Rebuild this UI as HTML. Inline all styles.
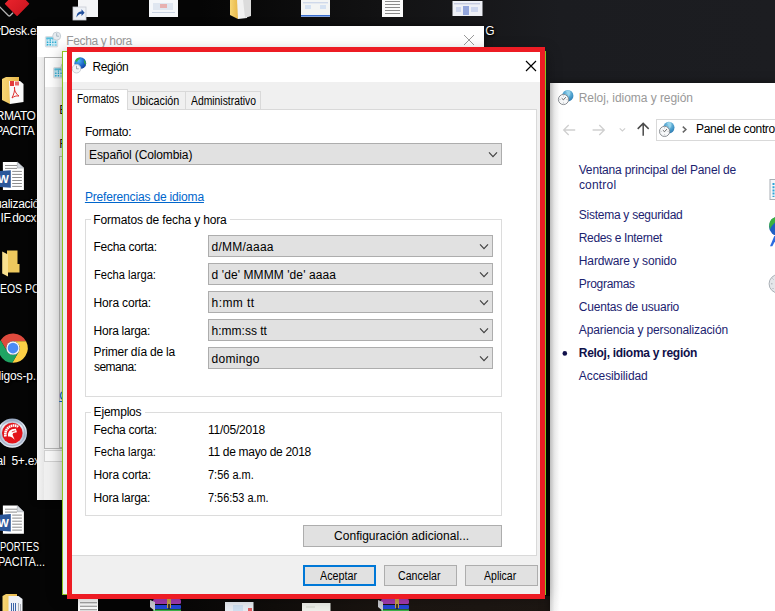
<!DOCTYPE html>
<html lang="es"><head><meta charset="utf-8"><title>Región</title>
<style>
html,body{margin:0;padding:0}
body{width:775px;height:611px;overflow:hidden;position:relative;background:#070707;font-family:"Liberation Sans",sans-serif;font-size:12px}
.a{position:absolute}
.t{position:absolute;white-space:pre;line-height:calc(1.117em + 4px);transform-origin:0 50%}
#bg{left:0;top:0;width:775px;height:611px;background:
 linear-gradient(90deg,rgba(0,0,0,0) 150px,#1b1511 400px,#1d1713 560px) 0 596px/775px 15px no-repeat,
 linear-gradient(90deg,#050505 200px,#121213 380px,#1b1c20 560px,#1c1d21 775px) 0 0/775px 90px no-repeat,
 #050505}
.combo{position:absolute;background:#e1e1e1;border:1px solid #adadad;box-sizing:border-box;height:22px}
.combo svg{position:absolute;right:3px;top:7px}
.btn{position:absolute;background:#e1e1e1;border:1px solid #adadad;box-sizing:border-box;height:21px}
.grp{position:absolute;border:1px solid #dcdcdc;box-sizing:border-box}
</style></head><body>
<div id="bg" class="a"></div>

<!-- ================= desktop icons ================= -->
<div id="desk" class="a" style="left:0;top:0;width:775px;height:611px">
<svg class="a" style="left:0;top:0" width="775" height="611" viewBox="0 0 775 611">
 <defs>
  <linearGradient id="gRed" x1="0" y1="0" x2="1" y2="1"><stop offset="0" stop-color="#f0262f"/><stop offset="1" stop-color="#c8141e"/></linearGradient>
  <linearGradient id="gFold" x1="0" y1="0" x2="1" y2="0"><stop offset="0" stop-color="#f7d675"/><stop offset="1" stop-color="#e8b84a"/></linearGradient>
  <linearGradient id="gSilver" x1="0" y1="0" x2="0" y2="1"><stop offset="0" stop-color="#8fa0bb"/><stop offset=".25" stop-color="#eef2f8"/><stop offset=".6" stop-color="#b4bfd2"/><stop offset="1" stop-color="#e6ebf3"/></linearGradient>
  <g id="word">
    <path d="M2.900 0 H17.300 L23.900 6.200 V28.100 H2.900 Z" fill="#fff"/>
    <path d="M17.300 0 L23.900 6.200 H17.300 Z" fill="#d5d8de" stroke="#8f949c" stroke-width=".5"/>
    <path d="M5 3.600h12M5 6.500h12M12.200 9.500h9.700M12.200 12.500h9.700M12.200 15.600h9.700M12.200 18.600h9.700M12.200 21.600h9.700M12.200 24.500h9.700" stroke="#8d8d8d" stroke-width="1"/>
    <path d="M-4 9.300 L10.800 8.300 V25.800 L-4 24.800Z" fill="#2b579a"/>
    <text x="3.300" y="21" font-family="Liberation Sans, sans-serif" font-size="11.500" font-weight="bold" fill="#fff" text-anchor="middle">W</text>
  </g>
  <g id="rar">
    <rect x="3" y="0" width="28" height="5" rx="1.5" fill="#a43bb0"/>
    <rect x="3" y="6" width="28" height="4" rx="1" fill="#2347d6"/>
    <rect x="3" y="10.5" width="28" height="2" fill="#3bb04a"/>
    <path d="M0 1 L5 3 V12 L0 8Z" fill="#c9c9cf"/>
    <rect x="17" y="0" width="4" height="9" fill="#c9a24a"/>
    <rect x="18.2" y="5" width="1.6" height="5" fill="#222"/>
  </g>
 </defs>
 <!-- AnyDesk -->
 <path d="M-1 6.200 L8.300 15.500 Q9.300 16.500 10.300 15.500 L13 12.800" stroke="#b4b4b4" stroke-width="1.300" fill="none"/>
 <path d="M17.100 -7.600 L28.400 3.700 L17.100 15.200 L5.700 3.700 Z" fill="url(#gRed)" stroke="url(#gRed)" stroke-width="1.600" stroke-linejoin="round"/>
 <!-- shortcut -->
 <rect x="78" y="-2" width="20" height="19" fill="#f4f5f7"/>
 <rect x="73" y="7" width="13" height="13" fill="#eef1f6" stroke="#c8ccd4" stroke-width=".8"/>
 <path d="M76.5 17.5 C76.5 13 79 11.5 81.5 11.5 V9.3 L84.6 12.7 L81.5 16 V13.8 C79.5 13.8 78 15 76.5 17.5Z" fill="#1f4e9c"/>
 <!-- thumbnails top -->
 <rect x="149" y="-1" width="29" height="18" fill="#f5f7fa"/><rect x="153" y="3" width="20" height="7" fill="#dfe6f0"/><rect x="160" y="4" width="7" height="4" fill="#e7b0b0"/><rect x="152" y="12" width="23" height="1" fill="#c9d3e3"/>
 <rect x="301" y="-1" width="29" height="18" fill="#f3f5f4"/><rect x="303" y="2" width="25" height="1.4" fill="#cfd9ea"/><rect x="305" y="5" width="6" height="4" fill="#d5e2f2"/><rect x="320" y="5" width="6" height="4" fill="#d5e2f2"/><rect x="301" y="15" width="29" height="1.6" fill="#3a6fd0"/>
 <rect x="452.500" y="1" width="30" height="15" fill="#eef0f6"/><rect x="463" y="6" width="6" height="9" fill="#93a6dc"/><rect x="456" y="7" width="5" height="5" fill="#cdd6ee"/><rect x="471" y="7" width="7" height="5" fill="#cdd6ee"/><rect x="454" y="3" width="26" height="1.4" fill="#c5cbe0"/>
 <!-- folder top -->
 <path d="M230 -1 H238 V19 L230 15Z" fill="url(#gFold)"/>
 <path d="M237 -1 H247 V18 L238 19Z" fill="#f2f2f2"/><path d="M243 -1 H251 V16 L245 18Z" fill="#dcdcdc"/>
 <!-- doc top -->
 <rect x="382" y="-1" width="21" height="18" fill="#fbfbfb"/>
 <path d="M385 1.500h15M385 4.500h15M385 7.500h15M385 10.500h15M385 13.500h15" stroke="#8b8b8b" stroke-width="1"/>
 <!-- PDF folder -->
 <path d="M2 79 L6 77 H19 V82 H10 V104 L2 100Z" fill="url(#gFold)"/>
 <path d="M9 81 H20 L23.500 84 V102 L10 104Z" fill="#fafafa"/>
 <path d="M10 81 h4 v5 h-4z" fill="#e23b3b"/><path d="M15 81.500 h4 v4 h-4z" fill="#e86a6a"/>
 <path d="M12 98 C14 94 15 90 14.500 87 C14 90 16 94 19 96 C16 95.500 14 96.500 12 98Z" stroke="#e03030" stroke-width="1" fill="none"/>
 <!-- word docs -->
 <use href="#word" x="0" y="161.900"/>
 <use href="#word" x="0" y="505.600"/>
 <!-- folder mid -->
 <path d="M7 250.500 H17.500 V264 H19.500 V272.500 H7 Z" fill="#efc95e"/>
 <path d="M2.200 251.500 L8 254.500 V276.500 L2.200 273.500 Z" fill="#f9e08e"/>
 <!-- chrome -->
 <g transform="translate(13,348.100) scale(.98)">
  <path d="M-12.635 -8.085 A15 15 0 0 1 13.320 -6.900 L0 -6.900 A6.900 6.900 0 0 0 -5.975 3.450 Z" fill="#de4a3d"/>
  <path d="M13.320 -6.900 A15 15 0 0 1 -0.685 14.985 L5.975 3.450 A6.900 6.900 0 0 0 0 -6.900 Z" fill="#fdd045"/>
  <path d="M-0.685 14.985 A15 15 0 0 1 -12.635 -8.085 L-5.975 3.450 A6.900 6.900 0 0 0 5.975 3.450 Z" fill="#1fa463"/>
  <circle r="6.900" fill="#f4f6f8"/><circle r="5.400" fill="#4a8bf5"/>
 </g>
 <!-- spartan -->
 <g transform="translate(12.300,433.100)">
  <circle r="14.700" fill="url(#gSilver)"/>
  <circle r="12.600" fill="none" stroke="#93a3bd" stroke-width="1.200" opacity=".7"/>
  <circle r="10.300" fill="#e3141b"/>
  <path d="M-6.800 3.500 C-8 -3 -3.500 -7.500 1.500 -7.600 C3.500 -7.600 5 -7 5.800 -6.200" stroke="#fff" stroke-width="2.600" fill="none" stroke-dasharray="1.600 .500"/>
  <path d="M-4.200 3.300 C-5 -1.500 -1.500 -4.600 3.600 -4.300 L4.600 -.800 L1 -.200 L.200 1.600 L2.400 6.600 L.200 4.600 C-.800 3.600 -2.500 3.300 -4.200 3.300Z" fill="#fff"/>
  <path d="M-.500 -1.200 L3 -2.400" stroke="#e3141b" stroke-width=".800"/>
 </g>
 <!-- bottom folder -->
 <path d="M2.500 596 L6 594 H17 V611 H2.500Z" fill="url(#gFold)"/>
 <path d="M8.500 596 H18.500 L22.500 599 V611 H8.500Z" fill="#eef1f6"/>
 <path d="M11.500 603v8M13.500 603v8M15.500 603v8" stroke="#3a64a8" stroke-width="1"/><path d="M18.500 603v8M20.500 604v7" stroke="#9aa0a8" stroke-width=".8"/>
 <!-- bottom row -->
 <rect x="78" y="599" width="20" height="13" fill="#fbfbfb"/>
 <path d="M80 602.700h17M80 606.300h17M80 609.800h17" stroke="#8b8b8b" stroke-width="1.100"/>
 <use href="#rar" x="150" y="599"/>
 <use href="#rar" x="378" y="599"/>
 <rect x="225" y="602" width="28.500" height="10" fill="#e8edf3"/><rect x="233" y="605" width="10" height="6" fill="#cfe0f0"/><rect x="248" y="608" width="4" height="3" fill="#e06060"/>
 <rect x="302" y="603" width="28.500" height="9" fill="#eef0ea"/><rect x="306" y="606" width="9" height="2" fill="#dfe3da"/>
</svg>

<span class="t" style="left:-5.3px;top:23.1px;font-size:12px;color:#fff;letter-spacing:-0.250px;text-shadow:1px 1px 2px #000,0 0 2px #000;">yDesk.exe</span>
<span class="t" style="left:-4.2px;top:108.1px;font-size:12px;color:#fff;letter-spacing:-0.559px;text-shadow:1px 1px 2px #000,0 0 2px #000;">RMATO</span>
<span class="t" style="left:-4.7px;top:123.1px;font-size:12px;color:#fff;letter-spacing:-0.412px;text-shadow:1px 1px 2px #000,0 0 2px #000;">PACITA</span>
<span class="t" style="left:-5.0px;top:195.6px;font-size:12px;color:#fff;letter-spacing:-0.300px;text-shadow:1px 1px 2px #000,0 0 2px #000;">ualización</span>
<span class="t" style="left:0.4px;top:210.1px;font-size:12px;color:#fff;letter-spacing:-0.300px;text-shadow:1px 1px 2px #000,0 0 2px #000;">IF.docx</span>
<span class="t" style="left:-0.1px;top:281.1px;font-size:12px;color:#fff;transform:scaleX(0.872);text-shadow:1px 1px 2px #000,0 0 2px #000;">EOS POS</span>
<span class="t" style="left:-5.5px;top:368.1px;font-size:12px;color:#fff;letter-spacing:-0.150px;text-shadow:1px 1px 2px #000,0 0 2px #000;">digos-p...</span>
<span class="t" style="left:-3.5px;top:452.6px;font-size:12px;color:#fff;letter-spacing:-0.250px;word-spacing:3px;text-shadow:1px 1px 2px #000,0 0 2px #000;">al 5+.exe</span>
<span class="t" style="left:-0.3px;top:539.1px;font-size:12px;color:#fff;transform:scaleX(0.794);text-shadow:1px 1px 2px #000,0 0 2px #000;">PORTES</span>
<span class="t" style="left:-2.2px;top:554.1px;font-size:12px;color:#fff;transform:scaleX(0.912);text-shadow:1px 1px 2px #000,0 0 2px #000;">PACITA...</span>
<span class="t" style="left:485.3px;top:23.1px;font-size:12px;color:#fff;text-shadow:1px 1px 2px #000,0 0 2px #000;">G</span>
</div>

<!-- ================= Control panel window ================= -->
<div id="cp" class="a" style="left:550px;top:83px;width:225px;height:528px;background:#fff;box-shadow:0 0 8px rgba(0,0,0,.5)">
 <div class="a" style="left:0;top:0;width:10px;height:528px;background:linear-gradient(90deg,#d4d4d4,#f2f2f2 45%,#fff)"></div>
 <div class="a" style="left:106px;top:36px;width:130px;height:22px;border:1px solid #d9d9d9;box-sizing:border-box"></div>
 <svg class="a" style="left:0;top:0" width="225" height="528" viewBox="550 83 225 528">
 <defs>
  <radialGradient id="gGl2" cx=".5" cy=".3" r=".8"><stop offset="0" stop-color="#8fd0ea"/><stop offset=".6" stop-color="#3f94c6"/><stop offset="1" stop-color="#2a6ea6"/></radialGradient>
  <g id="clk">
   <ellipse cx="4.300" cy="-3.800" rx="5.600" ry="5.800" fill="url(#gGl2)"/>
   <path d="M2 -8.500 C4 -7 5 -5 4.500 -2.500 C6.500 -4 7.500 -6.500 6.500 -9 C5 -9.600 3.500 -9.400 2 -8.500Z" fill="#9fd8ee" opacity=".8"/>
   <circle cx="0" cy="0" r="5.100" fill="#f7f8f9" stroke="#8b8f94" stroke-width="1"/>
   <path d="M0 -4v1M0 4v-1M-4 0h1M4 0h-1" stroke="#9aa0a6" stroke-width=".7"/>
   <path d="M-1.800 -1.200 L0 .300 L2.300 -2.300" stroke="#444" stroke-width=".8" fill="none"/>
  </g>
 </defs>
 <use href="#clk" x="563.500" y="99.500"/>
 <use href="#clk" x="664.600" y="131.400"/>
 <!-- nav arrows -->
 <path d="M575.200 130 H563.700 M568.700 125 L563.700 130 L568.700 135" stroke="#cfcfcf" stroke-width="1.300" fill="none"/>
 <path d="M592.600 130 H604.300 M599.300 125 L604.300 130 L599.300 135" stroke="#cfcfcf" stroke-width="1.300" fill="none"/>
 <path d="M619.700 128.300 L622.400 131 L625.100 128.300" stroke="#cfcfcf" stroke-width="1.100" fill="none"/>
 <path d="M643.200 135.700 V123.400 M637.700 128.900 L643.200 123.400 L648.700 128.900" stroke="#4a4a4a" stroke-width="1.500" fill="none"/>
 <path d="M682.800 126.600 L685.900 129.500 L682.800 132.400" stroke="#666" stroke-width="1.500" fill="none"/>
 <!-- bullet -->
 <circle cx="564.800" cy="353.400" r="2.300" fill="#10104a"/>
 <!-- right icons -->
 <rect x="770" y="179.500" width="8" height="20" fill="#f4f6f8" stroke="#a9afb6" stroke-width="1"/>
 <path d="M773.500 183v14" stroke="#2fa4d8" stroke-width="2" stroke-dasharray="2 1.200"/>
 <circle cx="778.800" cy="226.300" r="9.800" fill="#1f5fc4"/>
 <path d="M769.300 224 C769.800 220.500 772 217.800 775.500 217 V222 C773 224.500 771 226.500 770 229.500 C769.400 228 769.200 226 769.300 224Z" fill="#3bb23e"/>
 <path d="M770 246.300 L774.300 236 H776 V239.500 L772.300 246.300Z" fill="#2b6be0"/>
 <circle cx="778.400" cy="283.800" r="9.300" fill="#e4e7ea" stroke="#aab0b6" stroke-width="1"/>
 <path d="M771 283.800h1.500M772.500 278.500l1 1M772.500 289l1 -1" stroke="#9aa0a6" stroke-width=".8"/>
</svg>

</div>
<div class="a" style="left:0;top:0">
<span class="t" style="left:578.7px;top:90.1px;font-size:12px;color:#999;letter-spacing:-0.052px;">Reloj, idioma y región</span>
<span class="t" style="left:696.1px;top:121.1px;font-size:12px;color:#000;letter-spacing:-0.356px;">Panel de control</span>
<span class="t" style="left:578.7px;top:162.1px;font-size:12px;color:#1c2370;letter-spacing:-0.156px;">Ventana principal del Panel de</span>
<span class="t" style="left:578.9px;top:177.1px;font-size:12px;color:#1c2370;letter-spacing:0.195px;">control</span>
<span class="t" style="left:578.8px;top:207.1px;font-size:12px;color:#1c2370;letter-spacing:-0.263px;">Sistema y seguridad</span>
<span class="t" style="left:578.8px;top:230.1px;font-size:12px;color:#1c2370;letter-spacing:-0.349px;">Redes e Internet</span>
<span class="t" style="left:578.8px;top:253.1px;font-size:12px;color:#1c2370;letter-spacing:-0.129px;">Hardware y sonido</span>
<span class="t" style="left:578.8px;top:276.1px;font-size:12px;color:#1c2370;letter-spacing:-0.298px;">Programas</span>
<span class="t" style="left:578.8px;top:299.1px;font-size:12px;color:#1c2370;letter-spacing:-0.210px;">Cuentas de usuario</span>
<span class="t" style="left:578.8px;top:322.1px;font-size:12px;color:#1c2370;letter-spacing:-0.128px;">Apariencia y personalización</span>
<span class="t" style="left:578.8px;top:345.1px;font-size:12px;color:#10104a;letter-spacing:-0.295px;font-weight:bold;">Reloj, idioma y región</span>
<span class="t" style="left:578.8px;top:368.1px;font-size:12px;color:#1c2370;letter-spacing:-0.087px;">Accesibilidad</span>
</div>

<!-- ================= Fecha y hora window ================= -->
<div id="fh" class="a" style="left:37px;top:26px;width:447px;height:474px;background:#f0f0f0;box-shadow:0 0 6px rgba(0,0,0,.6)">
 <div class="a" style="left:0;top:0;width:447px;height:31px;background:#fff"></div>
 <div class="a" style="left:0;top:31px;width:7px;height:443px;background:linear-gradient(90deg,#f6f6f6,#e6e6e6)"></div>
 <!-- inner window -->
 <div class="a" style="left:7px;top:31px;width:430px;height:392px;background:#f0f0f0;border:1px solid #b4b4b4;box-sizing:border-box">
   <div class="a" style="left:0;top:0;width:428px;height:29px;background:#fff"></div>
   <div class="a" style="left:14px;top:98px;width:100px;height:290px;border:1px solid #b9b9b9;background:#f4f4f4"></div>
 </div>
 <div class="a" style="left:7px;top:424px;width:60px;height:12px;background:#f8f8f8;border:1px solid #d0d0d0;box-sizing:border-box"></div>
 <svg class="a" style="left:426px;top:8px" width="12" height="12" viewBox="0 0 12 12"><path d="M1 1 L11 11 M11 1 L1 11" stroke="#9a9a9a" stroke-width="1" fill="none"/></svg>
 <svg class="a" style="left:0;top:0" width="100" height="80" viewBox="37 26 100 80">
 <defs>
  <g id="cal">
   <rect x="0" y="4.500" width="12.500" height="10.500" rx="1" fill="#dfe4e8" stroke="#c9d0d6" stroke-width=".6"/>
   <rect x="1" y="5.500" width="10.500" height="8.500" fill="#8fd4e9"/>
   <rect x="1" y="5.500" width="10.500" height="1.600" fill="#55bddb"/>
   <path d="M1 9h10.500M1 11.300h10.500M3.600 7.100v6.900M6.200 7.100v6.900M8.800 7.100v6.900" stroke="#d4eef7" stroke-width="1"/>
   <path d="M2.300 10.200h.1M4.900 8.100h.1M4.900 10.200h.1M7.500 10.200h.1M4.900 12.600h.1M2.300 12.600h.1M10 10.200h.1" stroke="#1fa3cc" stroke-width="1.400" stroke-linecap="round"/>
   <circle cx="11.400" cy="4.100" r="4" fill="#e6ebef" stroke="#c3cbd2" stroke-width=".9"/>
   <path d="M11.400 1.200v3h2.400" stroke="#98a9b8" stroke-width=".8" fill="none"/>
  </g>
 </defs>
 <use href="#cal" x="45.300" y="32"/>
 <use href="#cal" x="53.500" y="63"/>
</svg>

</div>
<div class="a" style="left:0;top:0">
<span class="t" style="left:66.3px;top:33.1px;font-size:12px;color:#999;letter-spacing:-0.368px;">Fecha y hora</span>
<span class="t" style="left:59.2px;top:102.1px;font-size:12px;color:#111">E</span>
<span class="t" style="left:59.2px;top:136.1px;font-size:12px;color:#111">F</span>
<span class="t" style="left:59.3px;top:387.6px;font-size:12px;color:#0066cc;text-decoration:underline">C</span>
</div>

<!-- ================= Región window ================= -->
<div id="reg" class="a" style="left:62px;top:51px;width:484px;height:544px;background:#f0f0f0;border:1px solid #8cc21e;box-sizing:border-box;box-shadow:0 2px 14px rgba(0,0,0,.35)">
 <div class="a" style="left:0;top:0;width:482px;height:30px;background:#fff"></div>
 <!-- close X -->
 <svg class="a" style="left:462px;top:8px" width="12" height="12" viewBox="0 0 12 12"><path d="M1 1 L11 11 M11 1 L1 11" stroke="#000" stroke-width="1.15" fill="none"/></svg>
</div>
<!-- coordinates below are absolute page coords -->
<div class="a" style="left:0;top:0">
 <!-- tab page -->
 <div class="a" style="left:69px;top:109px;width:468px;height:447px;background:#fff;border:1px solid #d9d9d9;box-sizing:border-box"></div>
 <!-- tabs -->
 <div class="a" style="left:127px;top:91px;width:59px;height:19px;background:#f0f0f0;border:1px solid #d9d9d9;box-sizing:border-box"></div>
 <div class="a" style="left:185px;top:91px;width:76px;height:19px;background:#f0f0f0;border:1px solid #d9d9d9;box-sizing:border-box"></div>
 <div class="a" style="left:69px;top:89px;width:59px;height:21px;background:#fff;border:1px solid #d9d9d9;border-bottom:none;box-sizing:border-box"></div>

 <div class="combo" style="left:85px;top:143px;width:417px"><svg width="11" height="7" viewBox="0 0 11 7"><path d="M2 1.400 L6 5.600 L10 1.400" stroke="#404040" stroke-width="1.150" fill="none"/></svg></div>

 <div class="grp" style="left:85px;top:219px;width:417px;height:178px"></div>
 <div class="a" style="left:91px;top:212px;width:139px;height:14px;background:#fff"></div>
 <div class="combo" style="left:208px;top:235px;width:285px"><svg width="11" height="7" viewBox="0 0 11 7"><path d="M2 1.400 L6 5.600 L10 1.400" stroke="#404040" stroke-width="1.150" fill="none"/></svg></div>
 <div class="combo" style="left:208px;top:263px;width:285px"><svg width="11" height="7" viewBox="0 0 11 7"><path d="M2 1.400 L6 5.600 L10 1.400" stroke="#404040" stroke-width="1.150" fill="none"/></svg></div>
 <div class="combo" style="left:208px;top:291px;width:285px"><svg width="11" height="7" viewBox="0 0 11 7"><path d="M2 1.400 L6 5.600 L10 1.400" stroke="#404040" stroke-width="1.150" fill="none"/></svg></div>
 <div class="combo" style="left:208px;top:319px;width:285px"><svg width="11" height="7" viewBox="0 0 11 7"><path d="M2 1.400 L6 5.600 L10 1.400" stroke="#404040" stroke-width="1.150" fill="none"/></svg></div>
 <div class="combo" style="left:208px;top:347px;width:285px"><svg width="11" height="7" viewBox="0 0 11 7"><path d="M2 1.400 L6 5.600 L10 1.400" stroke="#404040" stroke-width="1.150" fill="none"/></svg></div>

 <div class="grp" style="left:85px;top:412px;width:417px;height:104px"></div>
 <div class="a" style="left:91px;top:405px;width:54px;height:14px;background:#fff"></div>

 <div class="btn" style="left:303px;top:525px;width:199px;height:22px"></div>
 <div class="btn" style="left:303px;top:565px;width:73px;border:2px solid #0078d7"></div>
 <div class="btn" style="left:384px;top:565px;width:73px"></div>
 <div class="btn" style="left:465px;top:565px;width:73px"></div>
 <svg class="a" style="left:70px;top:54px" width="24" height="24" viewBox="70 54 24 24">
 <defs>
  <radialGradient id="gGlobe" cx=".35" cy=".3" r=".8"><stop offset="0" stop-color="#49b6f2"/><stop offset=".6" stop-color="#1d63c8"/><stop offset="1" stop-color="#123a94"/></radialGradient>
 </defs>
 <circle cx="80.300" cy="63.200" r="5.900" fill="url(#gGlobe)"/>
 <path d="M75.200 61 C76 58 78.500 57.300 80.500 57.800 C79.500 59.500 77.500 60 77 62Z" fill="#36b03c"/>
 <path d="M84 59.500 C85.500 61 86.200 63 85.700 65 C84.300 64 83.800 61.500 84 59.500Z" fill="#36b03c"/>
 <circle cx="76.500" cy="68.700" r="4.300" fill="#f3f5f7" stroke="#c3c8ce" stroke-width=".9"/>
 <path d="M76.500 65.800v3h2.200" stroke="#7d8790" stroke-width=".7" fill="none"/>
</svg>

<span class="t" style="left:92.5px;top:59.1px;font-size:12px;color:#000;letter-spacing:-0.386px;">Región</span>
<span class="t" style="left:76.7px;top:91.1px;font-size:12px;color:#000;transform:scaleX(0.835);">Formatos</span>
<span class="t" style="left:131.8px;top:93.1px;font-size:12px;color:#000;transform:scaleX(0.897);">Ubicación</span>
<span class="t" style="left:191.3px;top:93.1px;font-size:12px;color:#000;transform:scaleX(0.863);">Administrativo</span>
<span class="t" style="left:84.9px;top:124.1px;font-size:12px;color:#000;letter-spacing:-0.174px;">Formato:</span>
<span class="t" style="left:89.1px;top:147.1px;font-size:12px;color:#000;letter-spacing:-0.123px;">Español (Colombia)</span>
<span class="t" style="left:84.9px;top:189.1px;font-size:12px;color:#0066cc;letter-spacing:-0.168px;text-decoration:underline;">Preferencias de idioma</span>
<span class="t" style="left:93.3px;top:212.1px;font-size:12px;color:#000;letter-spacing:-0.141px;">Formatos de fecha y hora</span>
<span class="t" style="left:93.6px;top:239.1px;font-size:12px;color:#000;letter-spacing:-0.300px;">Fecha corta:</span>
<span class="t" style="left:211.6px;top:239.1px;font-size:12px;color:#000;letter-spacing:0.234px;">d/MM/aaaa</span>
<span class="t" style="left:93.6px;top:267.1px;font-size:12px;color:#000;transform:scaleX(0.929);">Fecha larga:</span>
<span class="t" style="left:211.6px;top:267.1px;font-size:12px;color:#000;letter-spacing:0.087px;">d 'de' MMMM 'de' aaaa</span>
<span class="t" style="left:93.6px;top:295.1px;font-size:12px;color:#000;letter-spacing:-0.176px;">Hora corta:</span>
<span class="t" style="left:211.6px;top:295.1px;font-size:12px;color:#000;letter-spacing:0.414px;">h:mm tt</span>
<span class="t" style="left:93.6px;top:323.1px;font-size:12px;color:#000;letter-spacing:-0.267px;">Hora larga:</span>
<span class="t" style="left:211.6px;top:323.1px;font-size:12px;color:#000;letter-spacing:-0.005px;">h:mm:ss tt</span>
<span class="t" style="left:93.6px;top:344.1px;font-size:12px;color:#000;letter-spacing:-0.207px;">Primer día de la</span>
<span class="t" style="left:93.9px;top:359.1px;font-size:12px;color:#000;letter-spacing:-0.505px;">semana:</span>
<span class="t" style="left:211.6px;top:351.1px;font-size:12px;color:#000;letter-spacing:0.311px;">domingo</span>
<span class="t" style="left:93.6px;top:404.1px;font-size:12px;color:#000;letter-spacing:-0.194px;">Ejemplos</span>
<span class="t" style="left:93.6px;top:422.1px;font-size:12px;color:#000;letter-spacing:-0.300px;">Fecha corta:</span>
<span class="t" style="left:208.0px;top:422.1px;font-size:12px;color:#000;letter-spacing:-0.230px;">11/05/2018</span>
<span class="t" style="left:93.6px;top:444.1px;font-size:12px;color:#000;transform:scaleX(0.929);">Fecha larga:</span>
<span class="t" style="left:208.0px;top:444.1px;font-size:12px;color:#000;letter-spacing:-0.314px;">11 de mayo de 2018</span>
<span class="t" style="left:93.6px;top:467.1px;font-size:12px;color:#000;letter-spacing:-0.176px;">Hora corta:</span>
<span class="t" style="left:208.0px;top:467.1px;font-size:12px;color:#000;transform:scaleX(0.915);">7:56 a.m.</span>
<span class="t" style="left:93.6px;top:490.1px;font-size:12px;color:#000;letter-spacing:-0.267px;">Hora larga:</span>
<span class="t" style="left:208.0px;top:490.1px;font-size:12px;color:#000;transform:scaleX(0.908);">7:56:53 a.m.</span>
<span class="t" style="left:334.1px;top:528.1px;font-size:12px;color:#000;letter-spacing:0.010px;">Configuración adicional...</span>
<span class="t" style="left:320.2px;top:568.1px;font-size:12px;color:#000;transform:scaleX(0.895);">Aceptar</span>
<span class="t" style="left:397.9px;top:568.1px;font-size:12px;color:#000;transform:scaleX(0.883);">Cancelar</span>
<span class="t" style="left:484.3px;top:568.1px;font-size:12px;color:#000;transform:scaleX(0.878);">Aplicar</span>
</div>

<!-- ================= red annotation rectangle ================= -->
<div class="a" style="left:67px;top:47px;width:478px;height:552px;border:5px solid #ed1c24;box-sizing:border-box"></div>
</body></html>
